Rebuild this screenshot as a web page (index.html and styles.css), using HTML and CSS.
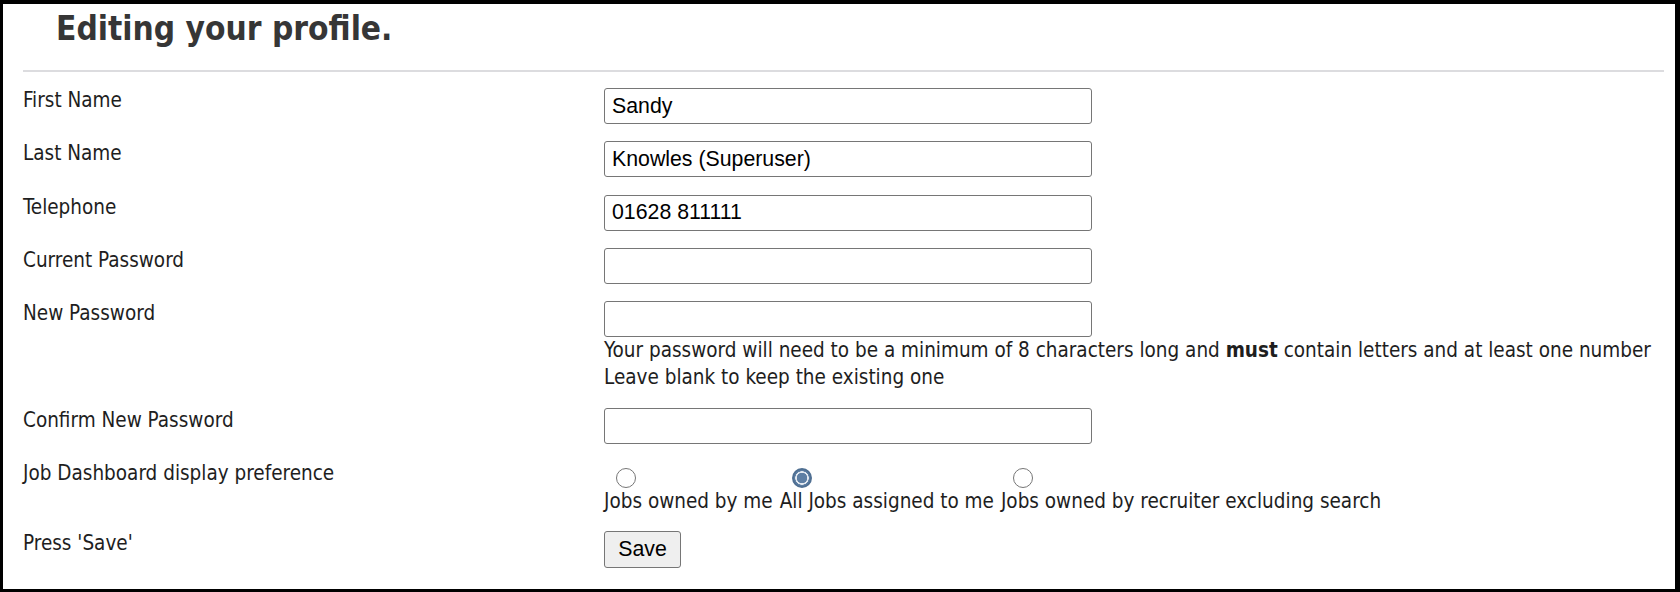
FILE: index.html
```html
<!DOCTYPE html>
<html lang="en">
<head>
    <meta charset="UTF-8">
    <meta name="viewport" content="width=device-width, initial-scale=1.0">
    <title>Edit Profile</title>
    <link rel="stylesheet" href="styles.css">
</head>
<body>
    <div class="frame">
        <div class="page">
            <h1 class="title">Editing your profile.</h1>
            <hr class="rule">
            <form class="profile-form" onsubmit="return false;">
                <label class="field-label" for="firstName">First Name</label>
                <div class="field"><input type="text" id="firstName" value="Sandy"></div>

                <label class="field-label" for="lastName">Last Name</label>
                <div class="field"><input type="text" id="lastName" value="Knowles (Superuser)"></div>

                <label class="field-label" for="telephone">Telephone</label>
                <div class="field"><input type="text" id="telephone" value="01628 811111"></div>

                <label class="field-label" for="currentPassword">Current Password</label>
                <div class="field"><input type="password" id="currentPassword"></div>

                <label class="field-label" for="newPassword">New Password</label>
                <div class="field">
                    <input type="password" id="newPassword">
                    <p class="hint">Your password will need to be a minimum of 8 characters long and <b>must</b> contain letters and at least one number<br>Leave blank to keep the existing one</p>
                </div>

                <label class="field-label" for="confirmPassword">Confirm New Password</label>
                <div class="field"><input type="password" id="confirmPassword"></div>

                <span class="field-label">Job Dashboard display preference</span>
                <div class="field choice-group">
                    <label class="choice"><input type="radio" name="dashboard" value="owned">Jobs owned by me</label>
                    <label class="choice"><input type="radio" name="dashboard" value="assigned" checked>All Jobs assigned to me</label>
                    <label class="choice"><input type="radio" name="dashboard" value="recruiter">Jobs owned by recruiter excluding search</label>
                </div>

                <span class="field-label">Press 'Save'</span>
                <div class="field"><button type="submit" class="save-btn">Save</button></div>
            </form>
        </div>
    </div>
</body>
</html>
```

FILE: styles.css
```css
* {
    box-sizing: border-box;
}
html, body {
    margin: 0;
    padding: 0;
    background: #000;
}
body {
    font-family: "DejaVu Sans Condensed", "DejaVu Sans", sans-serif;
    font-stretch: condensed;
    color: #1e1e1e;
}
.frame {
    width: 1680px;
    height: 592px;
    border-style: solid;
    border-color: #000;
    border-width: 4px 5px 3px 3px;
    background: #fff;
    overflow: hidden;
}
.page {
    padding: 0 11px 0 20px;
}
.title {
    margin: 7px 0 0 0;
    padding-left: 33px;
    font-size: 33.2px;
    line-height: 36px;
    font-weight: bold;
    color: #363636;
}
.rule {
    margin: 23px 0 0 0;
    border: none;
    height: 2px;
    background: #dcdcdf;
}
.profile-form {
    display: grid;
    grid-template-columns: 581px 1fr;
    row-gap: 17.3px;
    margin-top: 16px;
}
.field-label {
    font-size: 20.5px;
    line-height: 24px;
}
.field input[type="text"],
.field input[type="password"] {
    display: block;
    width: 488px;
    height: 36px;
    padding: 0 7px;
    border: 1px solid #767676;
    border-radius: 3px;
    font-family: "Liberation Sans", Arial, sans-serif;
    font-size: 21.3px;
    color: #000;
    background: #fff;
}
.hint {
    margin: 0;
    font-size: 20.5px;
    line-height: 26.7px;
}
.choice-group {
    display: flex;
    gap: 7px;
}
.choice {
    display: inline-flex;
    flex-direction: column;
    align-items: flex-start;
    font-size: 20.5px;
    line-height: 26px;
}
.choice input[type="radio"] {
    appearance: none;
    -webkit-appearance: none;
    display: block;
    width: 20px;
    height: 20px;
    margin: 7px 0 0 12px;
    border: 1px solid #767676;
    border-radius: 50%;
    background: #fff;
}
.choice input[type="radio"]:checked {
    border: 2px solid #4f6f92;
    background: radial-gradient(circle, #5e7fa4 0 5px, #e3e9f0 5.5px 6.5px, #5e7fa4 7px);
}
.save-btn {
    width: 77px;
    height: 37px;
    padding: 0;
    border: 1px solid #767676;
    border-radius: 3px;
    background: #efefef;
    font-family: "Liberation Sans", Arial, sans-serif;
    font-size: 21.3px;
    color: #000;
}
```
